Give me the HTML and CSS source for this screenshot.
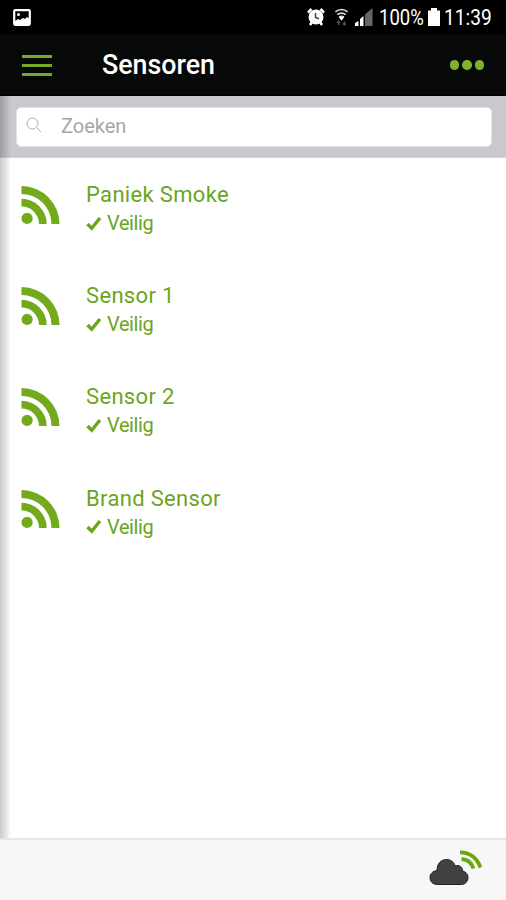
FILE: index.html
```html
<!DOCTYPE html>
<html lang="nl">
<head>
  <meta charset="UTF-8">
  <meta name="viewport" content="width=device-width, initial-scale=1.0">
  <title>Sensoren</title>
  <link rel="stylesheet" href="styles.css">
</head>
<body>
  <!-- Shared icons -->
  <svg class="sprite" width="0" height="0">
    <symbol id="icon-rss" viewBox="0 0 38 38">
      <circle cx="5.6" cy="32.4" r="5.6"/>
      <path d="M0 12.800a25.200 25.200 0 0 1 25.200 25.200h-7.700A17.500 17.500 0 0 0 0 20.500z"/>
      <path d="M0 0a38 38 0 0 1 38 38h-8A30 30 0 0 0 0 8z"/>
    </symbol>
    <symbol id="icon-check" viewBox="0 0 16 15">
      <path d="M1.500 8l4.200 4.200L14 2" fill="none" stroke="currentColor" stroke-width="3.400"/>
    </symbol>
  </svg>

  <div class="status-bar">
    <svg class="picture-icon" viewBox="0 0 18 17">
      <rect x="1.200" y="1.200" width="15.600" height="14.600" rx="1" fill="none" stroke="#fff" stroke-width="2.200"/>
      <circle cx="5.500" cy="5.500" r="1.500" fill="#fff"/>
      <path d="M2 12l3-2 2 1 3-2 2 1 2-2 3 2v5H2z" fill="#fff"/>
    </svg>
    <div class="status-right">
      <svg class="alarm-icon" viewBox="0 0 18 18">
        <path d="M1 4.500L4.500 1M17 4.500L13.500 1M3 17l2-3M15 17l-2-3" stroke="#fff" stroke-width="2.600"/>
        <circle cx="9" cy="9" r="7.500" fill="#fff"/>
        <path d="M8.500 5v4.500l3.500 1.300" fill="none" stroke="#444" stroke-width="1.500"/>
      </svg>
      <svg class="wifi-icon" viewBox="0 0 16 18">
        <g fill="none" stroke="#ddd" stroke-width="1.700">
          <path d="M1.500 3.500q6.500-5 13 0"/>
          <path d="M3.500 6.500q4.500-3.400 9 0"/>
          <path d="M5.500 9.200q2.500-2 5 0"/>
        </g>
        <path d="M5 9h6l-3 4z" fill="#fff"/>
        <path d="M5 17.500v-4M3.300 15.200L5 13.500l1.500 1.700M11 13.500v4M9.500 15.800l1.500 1.700 1.700-1.700" fill="none" stroke="#555" stroke-width="1.500"/>
      </svg>
      <svg class="signal-icon" viewBox="0 0 18 18">
        <path d="M0 15l3.500-2v5H0zM5 11l3.500-3v10H5z" fill="#fff"/>
        <path d="M10 6.500L17.500 0v18H10z" fill="#666"/>
      </svg>
      <span class="battery-level">100%</span>
      <svg class="battery-icon" viewBox="0 0 12 18">
        <path d="M3 0h6v2.500h3V18H0V2.500h3z" fill="#fff"/>
      </svg>
      <span class="clock">11:39</span>
    </div>
  </div>

  <header class="header">
    <div class="menu-btn">
      <span></span>
      <span></span>
      <span></span>
    </div>
    <h1>Sensoren</h1>
    <div class="more-btn">
      <span></span>
      <span></span>
      <span></span>
    </div>
  </header>

  <main class="content">
    <div class="search-bar">
      <div class="search-box">
        <svg class="search-icon" viewBox="0 0 16 16">
          <circle cx="6.500" cy="6.500" r="5.500"/>
          <path d="M10.500 10.500l4.500 4.500"/>
        </svg>
        <span>Zoeken</span>
      </div>
    </div>

    <ul class="sensor-list">
      <li class="sensor">
        <svg class="sensor-icon"><use href="#icon-rss"/></svg>
        <div class="sensor-info">
          <h2>Paniek Smoke</h2>
          <p><svg class="check-icon"><use href="#icon-check"/></svg>Veilig</p>
        </div>
      </li>
      <li class="sensor">
        <svg class="sensor-icon"><use href="#icon-rss"/></svg>
        <div class="sensor-info">
          <h2>Sensor 1</h2>
          <p><svg class="check-icon"><use href="#icon-check"/></svg>Veilig</p>
        </div>
      </li>
      <li class="sensor">
        <svg class="sensor-icon"><use href="#icon-rss"/></svg>
        <div class="sensor-info">
          <h2>Sensor 2</h2>
          <p><svg class="check-icon"><use href="#icon-check"/></svg>Veilig</p>
        </div>
      </li>
      <li class="sensor">
        <svg class="sensor-icon"><use href="#icon-rss"/></svg>
        <div class="sensor-info">
          <h2>Brand Sensor</h2>
          <p><svg class="check-icon"><use href="#icon-check"/></svg>Veilig</p>
        </div>
      </li>
    </ul>
  </main>

  <footer class="footer">
    <svg class="cloud-icon" viewBox="0 0 54 36">
      <path d="M8.500 34.500C3.500 34.500 1 31.500 1 27.500c0-4 3-6.500 7-7C8 13.500 12 9.500 17.500 9.500c4 0 7.500 2.500 8.700 6.500 4-1.500 7.300 1 7.500 5 3.300.8 5.300 3.500 5.300 6.500 0 4-2.700 7-7 7z" fill="#414141" stroke="#222" stroke-width="1"/>
      <path d="M31 2.300Q46 2.500 51.500 17.500M32.500 9Q41.500 9.500 44.500 18.500" fill="none" stroke="#6aa812" stroke-width="3.800"/>
    </svg>
  </footer>
</body>
</html>
```

FILE: styles.css
```css
* {
  box-sizing: border-box;
}

body {
  margin: 0;
  height: 900px;
  display: flex;
  flex-direction: column;
  font-family: Roboto, "Liberation Sans", sans-serif;
  background-color: #fff;
  overflow: hidden;
}

h1,
h2,
p,
ul {
  margin: 0;
  padding: 0;
}

svg {
  display: block;
  flex: none;
}

.sprite {
  position: absolute;
}

/* Android status bar */
.status-bar {
  height: 34px;
  flex: none;
  display: flex;
  justify-content: space-between;
  align-items: center;
  padding: 0 14px 0 13px;
  background-color: #000;
  color: #fff;
}

.picture-icon {
  width: 18px;
  height: 17px;
}

.status-right {
  display: flex;
  align-items: center;
  font-size: 21.5px;
  line-height: 34px;
}

.alarm-icon {
  width: 18px;
  height: 18px;
  margin-right: 9px;
}

.wifi-icon {
  width: 15px;
  height: 18px;
  margin-right: 6px;
}

.signal-icon {
  width: 18px;
  height: 18px;
  margin-right: 6px;
}

.battery-level,
.clock {
  padding-top: 2px;
  white-space: nowrap;
  transform-origin: left center;
}

.battery-level {
  width: 49px;
  transform: scaleX(0.86);
}

.battery-icon {
  width: 12px;
  height: 18px;
  margin-right: 4px;
}

.clock {
  width: 48px;
  transform: scaleX(0.89);
}

/* Header */
.header {
  height: 62px;
  flex: none;
  display: flex;
  align-items: center;
  padding: 1px 22px 0 22px;
  background-color: #060908;
  border-bottom: 1px solid #000;
  color: #fff;
}

.menu-btn {
  width: 30px;
  display: flex;
  flex-direction: column;
  gap: 6px;
}

.menu-btn span {
  height: 3px;
  background-color: #76a82c;
}

.header h1 {
  flex: 1;
  margin-left: 50px;
  font-size: 26.8px;
  font-weight: 500;
  line-height: 32px;
}

.more-btn {
  display: flex;
  gap: 3px;
}

.more-btn span {
  width: 9.5px;
  height: 9.5px;
  border-radius: 50%;
  background-color: #80b22c;
}

/* Content */
.content {
  flex: 1;
  position: relative;
}

/* shadow of the side menu */
.content::before {
  content: "";
  position: absolute;
  top: 0;
  bottom: 0;
  left: 0;
  width: 11px;
  background: linear-gradient(to right, rgba(0, 0, 0, 0.21), rgba(0, 0, 0, 0.12) 45%, rgba(0, 0, 0, 0));
}

.search-bar {
  height: 62px;
  padding: 11px 14px 0 16px;
  background-color: #c9c8cd;
  border-bottom: 1px solid #d6d5d8;
}

.search-box {
  height: 40px;
  display: flex;
  align-items: center;
  background-color: #fff;
  border: 1px solid #e2e2e4;
  border-radius: 5px;
  color: #a6a6a6;
  font-size: 20px;
}

.search-box span {
  padding-bottom: 2px;
}

.search-icon {
  width: 16px;
  height: 16px;
  margin: 0 19px 5px 9px;
  fill: none;
  stroke: #aaa;
  stroke-width: 1;
}

.sensor-list {
  list-style: none;
}

.sensor {
  height: 101.2px;
  display: flex;
  padding: 22px 0 0 21px;
  color: #6ba51c;
}

.sensor-icon {
  width: 39px;
  height: 38px;
  margin-top: 6px;
  fill: #72aa1b;
}

.sensor-info {
  margin-left: 26px;
}

.sensor h2 {
  font-size: 22px;
  font-weight: 400;
  line-height: 30px;
  letter-spacing: 0.33px;
}

.sensor p {
  display: flex;
  align-items: center;
  margin-top: -1px;
  font-size: 20px;
  line-height: 28px;
  letter-spacing: -0.4px;
}

.check-icon {
  width: 16px;
  height: 15px;
  margin-right: 5px;
}

/* Footer */
.footer {
  height: 62px;
  flex: none;
  display: flex;
  justify-content: flex-end;
  padding: 10px 23px 0 0;
  background-color: #f7f7f7;
  border-top: 2px solid #e6e6e6;
}

.cloud-icon {
  width: 54px;
  height: 36px;
}
```
